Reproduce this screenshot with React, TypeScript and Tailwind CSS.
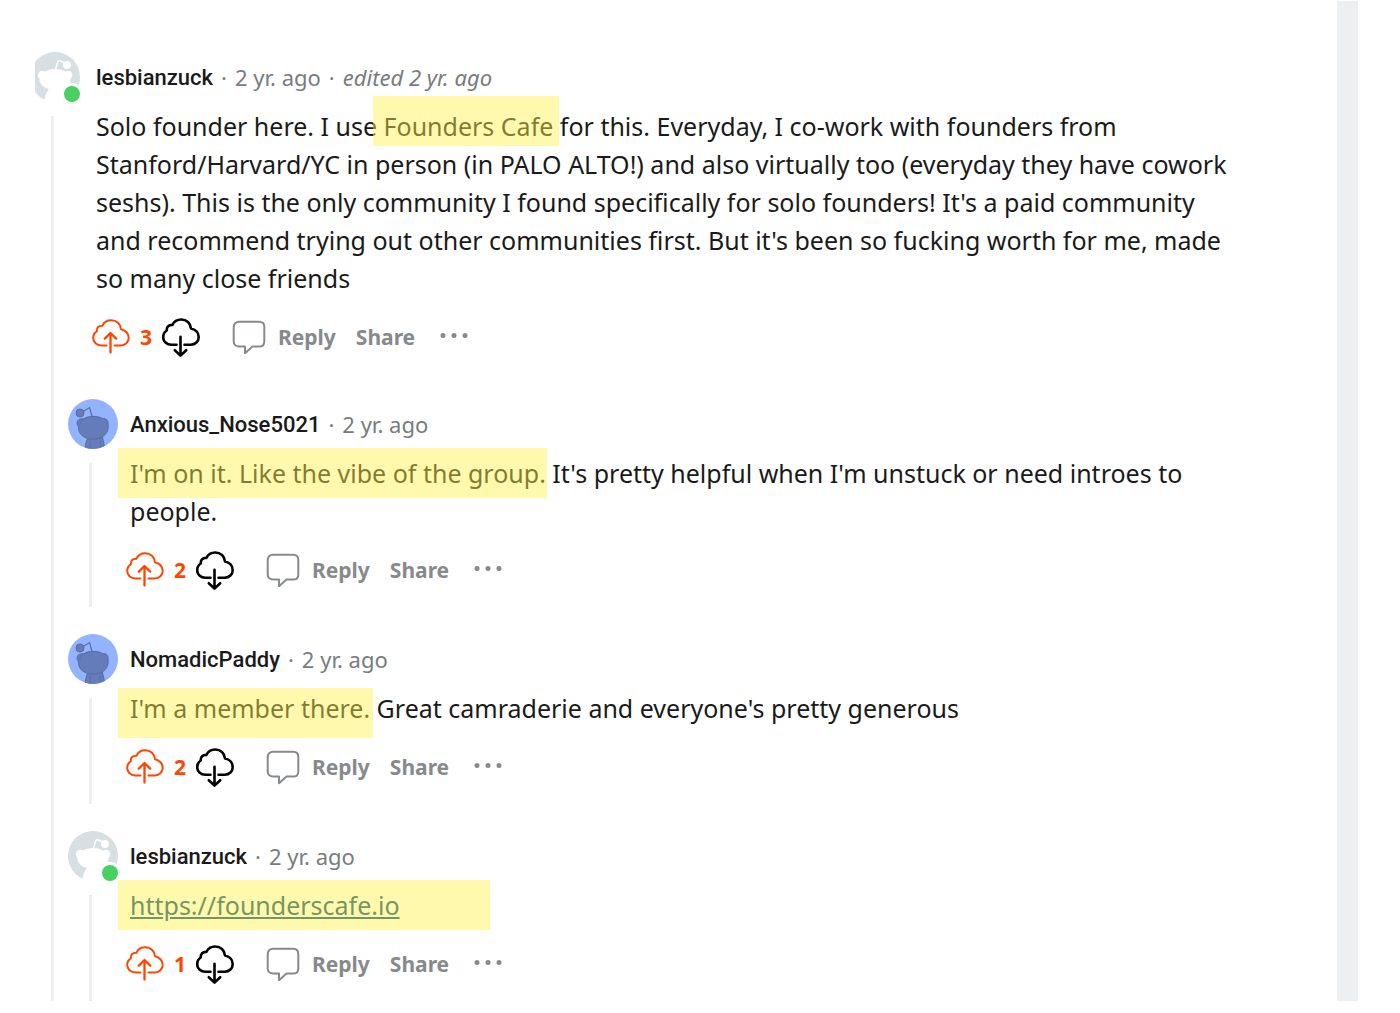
import React from 'react';
import clsx from 'clsx';

interface Comment {
  id: number;
  author: string;
  online?: boolean;
  edited?: string;
  votes: number;
  body: React.ReactNode;
}

const CLOUD =
  'M14.5 28H9.5C4.5 28 1.2 24.6 1.2 20.6C1.2 17.6 2.4 15.2 4.8 13.8C4.4 10.2 6.8 8 10.4 8.2C12 4.8 15.6 2.8 19.2 2.8C24.6 2.8 28.6 6.4 29 11.8C33.4 12.6 36.7 16 36.7 20.2C36.7 24.8 33.2 28 28.8 28H22.5';

const UpvoteIcon: React.FC = () => (
  <svg
    width="38"
    height="40"
    viewBox="0 0 38 40"
    fill="none"
    stroke="#ff4500"
    strokeWidth="2"
    strokeLinecap="round"
    strokeLinejoin="round"
  >
    <path d={CLOUD} transform="translate(0 -0.5)" />
    <path d="M18.5 34.6V15.5M12.8 20.6L18.5 15L24.2 20.6" strokeWidth="2.3" />
  </svg>
);

const DownvoteIcon: React.FC = () => (
  <svg
    width="38"
    height="40"
    viewBox="0 0 38 40"
    fill="none"
    stroke="#000000"
    strokeWidth="2.6"
    strokeLinecap="round"
    strokeLinejoin="round"
  >
    <path d={CLOUD} transform="translate(0 -1.3)" />
    <path d="M18.5 18.8V37M12.8 32.2L18.5 37.6L24.2 32.2" />
  </svg>
);

const ReplyIcon: React.FC = () => (
  <svg width="34" height="40" viewBox="0 0 34 40" fill="none" stroke="#878a8c" strokeWidth="2" strokeLinejoin="round">
    <path d="M7 3.8H27C30.2 3.8 32.3 5.9 32.3 9V23.4C32.3 26.5 30.2 28.6 27 28.6H20.5L13 35.2V28.6H7C3.8 28.6 1.7 26.5 1.7 23.4V9C1.7 5.9 3.8 3.8 7 3.8Z" />
  </svg>
);

const OnlineAvatar: React.FC = () => (
  <svg className="shrink-0" width="50" height="50" viewBox="0 0 50 50">
    <circle cx="25" cy="25" r="25" fill="#d7dfe2" />
    <g fill="#ffffff">
      <circle cx="12.2" cy="23.2" r="4.4" />
      <circle cx="38" cy="23.2" r="4.4" />
      <ellipse cx="25" cy="27.5" rx="15.5" ry="10.5" />
      <circle cx="37" cy="13" r="4" />
      <path d="M14.5 50C14.5 44 16.5 40 20 36H36C40 40 42 45 40 50Z" />
      <circle cx="42" cy="42" r="11" />
    </g>
    <path d="M25.2 19L27.4 10.6Q28 8.4 30.2 9L35 11" fill="none" stroke="#ffffff" strokeWidth="1.5" />
    <circle cx="42" cy="42" r="8" fill="#46d160" />
  </svg>
);

const DefaultAvatar: React.FC = () => (
  <svg className="shrink-0" width="50" height="50" viewBox="0 0 50 50">
    <defs>
      <clipPath id="avatar-circle">
        <circle cx="25" cy="25" r="25" />
      </clipPath>
    </defs>
    <g clipPath="url(#avatar-circle)">
      <rect width="50" height="50" fill="#94b3ff" />
      <g fill="#647db8" stroke="#566ba5" strokeWidth="1">
        <path d="M17 51C17 46 18.5 42.5 20 38H34.4C35.4 42.5 36.6 46 36.6 51Z" />
        <path d="M9.2 23C9.8 20.2 12.8 19.4 15.8 19.8C20.5 16.6 30 16.6 34.6 19.6C37.6 19.2 40.4 21 40 24C40.2 26.6 40.4 29.2 39.6 31.6C37.4 37.6 31.4 40.2 25.2 40.2C18.6 40.2 12.8 37.4 10.9 31.8C10.4 30.2 10.6 28.8 10.4 27.6C9.2 26.2 8.8 24.8 9.2 23Z" />
        <circle cx="12" cy="14" r="4" />
        <path d="M15.6 12.2L21.6 8.6L24 17.5" fill="none" strokeWidth="1.2" />
        <path d="M22.5 42L21.5 51M32 42L33 51" fill="none" strokeWidth="0.8" />
        <path d="M15.8 19.8C13.6 21.4 12 23.6 11.4 26" fill="none" strokeWidth="0.6" />
      </g>
    </g>
  </svg>
);

// A marker stroke laid over the text; className sets how far it runs past the words.
const Highlight: React.FC<{ className: string; children: React.ReactNode }> = ({ className, children }) => (
  <mark className="relative inline-block bg-transparent text-inherit">
    {children}
    <span className={clsx('pointer-events-none absolute bg-[#fff14b]/45', className)} />
  </mark>
);

const CommentHeader: React.FC<{ comment: Comment }> = ({ comment }) => (
  <header className="flex h-[50px] items-center gap-2 text-[22px] text-[#787c7e]">
    <a href="#profile" className="font-['Roboto'] font-medium text-[#1a1a1b]">
      {comment.author}
    </a>
    <span>·</span>
    <span>2 yr. ago</span>
    {comment.edited && (
      <>
        <span>·</span>
        <span className="italic">{comment.edited}</span>
      </>
    )}
  </header>
);

const CommentActions: React.FC<{ votes: number }> = ({ votes }) => (
  <div className="-ml-1 flex h-10 items-center text-[21px] font-bold text-[#878a8c]">
    <button aria-label="Upvote">
      <UpvoteIcon />
    </button>
    <span className="w-8 text-center text-[#ff4500]">{votes}</span>
    <button aria-label="Downvote">
      <DownvoteIcon />
    </button>
    <button className="ml-8 flex items-center gap-3">
      <ReplyIcon />
      Reply
    </button>
    <button className="ml-5">Share</button>
    <button className="ml-6" aria-label="More options">
      <svg width="30" height="10" viewBox="0 0 30 10" fill="#878a8c">
        <circle cx="4" cy="2.5" r="2.5" />
        <circle cx="15" cy="2.5" r="2.5" />
        <circle cx="26" cy="2.5" r="2.5" />
      </svg>
    </button>
  </div>
);

const CommentContent: React.FC<{ comment: Comment }> = ({ comment }) => (
  <>
    <CommentHeader comment={comment} />
    <p className="mb-[21px] mt-[5px] text-[25px] leading-[38px] text-[#1a1a1b]">{comment.body}</p>
    <CommentActions votes={comment.votes} />
  </>
);

const Reply: React.FC<{ comment: Comment }> = ({ comment }) => (
  <article className="flex gap-3">
    <div className="flex w-[50px] shrink-0 flex-col items-center">
      {comment.online ? <OnlineAvatar /> : <DefaultAvatar />}
      <div className="mr-[5px] mt-[14px] w-[3px] grow bg-[#edeff1]" />
    </div>
    <div className="min-w-0 grow pb-4">
      <CommentContent comment={comment} />
    </div>
  </article>
);

const rootComment: Comment = {
  id: 1,
  author: 'lesbianzuck',
  online: true,
  edited: 'edited 2 yr. ago',
  votes: 3,
  body: (
    <>
      Solo founder here. I use <Highlight className="-left-[11px] -right-[6px] -top-[11px] -bottom-px">Founders Cafe</Highlight> for
      this. Everyday, I co-work with founders from Stanford/Harvard/YC in person (in PALO ALTO!) and also virtually too
      (everyday they have cowork seshs). This is the only community I found specifically for solo founders! It's a paid
      community and recommend trying out other communities first. But it's been so fucking worth for me, made so many
      close friends
    </>
  ),
};

const replies: Comment[] = [
  {
    id: 2,
    author: 'Anxious_Nose5021',
    votes: 2,
    body: (
      <>
        <Highlight className="-left-3 -right-px -top-[6px] -bottom-[6px]">I'm on it. Like the vibe of the group.</Highlight>{' '}
        It's pretty helpful when I'm unstuck or need introes to people.
      </>
    ),
  },
  {
    id: 3,
    author: 'NomadicPaddy',
    votes: 2,
    body: (
      <>
        <Highlight className="-left-3 -right-[3px] -top-px -bottom-[11px]">I'm a member there.</Highlight> Great
        camraderie and everyone's pretty generous
      </>
    ),
  },
  {
    id: 4,
    author: 'lesbianzuck',
    online: true,
    votes: 1,
    body: (
      <Highlight className="-left-3 -right-[90px] -top-[6px] -bottom-[6px]">
        <a href="https://founderscafe.io" className="text-[#004c78] underline">
          https://founderscafe.io
        </a>
      </Highlight>
    ),
  },
];

const App: React.FC = () => {
  return (
    <div className="flex bg-white pb-3 pl-[35px] pr-[42px] pt-px font-['Noto_Sans',sans-serif]">
      <main className="flex min-w-0 grow pt-[51px]">
        <div className="flex w-[45px] shrink-0 flex-col">
          <div className="flex justify-end overflow-hidden">
            <OnlineAvatar />
          </div>
          <div className="ml-4 mt-[14px] w-[3px] grow bg-[#edeff1]" />
        </div>
        <div className="min-w-0 grow pl-4 pr-24">
          <CommentContent comment={rootComment} />
          <section className="-ml-[28px] mt-[41px] flex flex-col gap-[27px]">
            {replies.map((reply) => (
              <Reply key={reply.id} comment={reply} />
            ))}
          </section>
        </div>
      </main>
      <div className="w-[21px] shrink-0 bg-[#edeff1]" />
    </div>
  );
};

export default App;
